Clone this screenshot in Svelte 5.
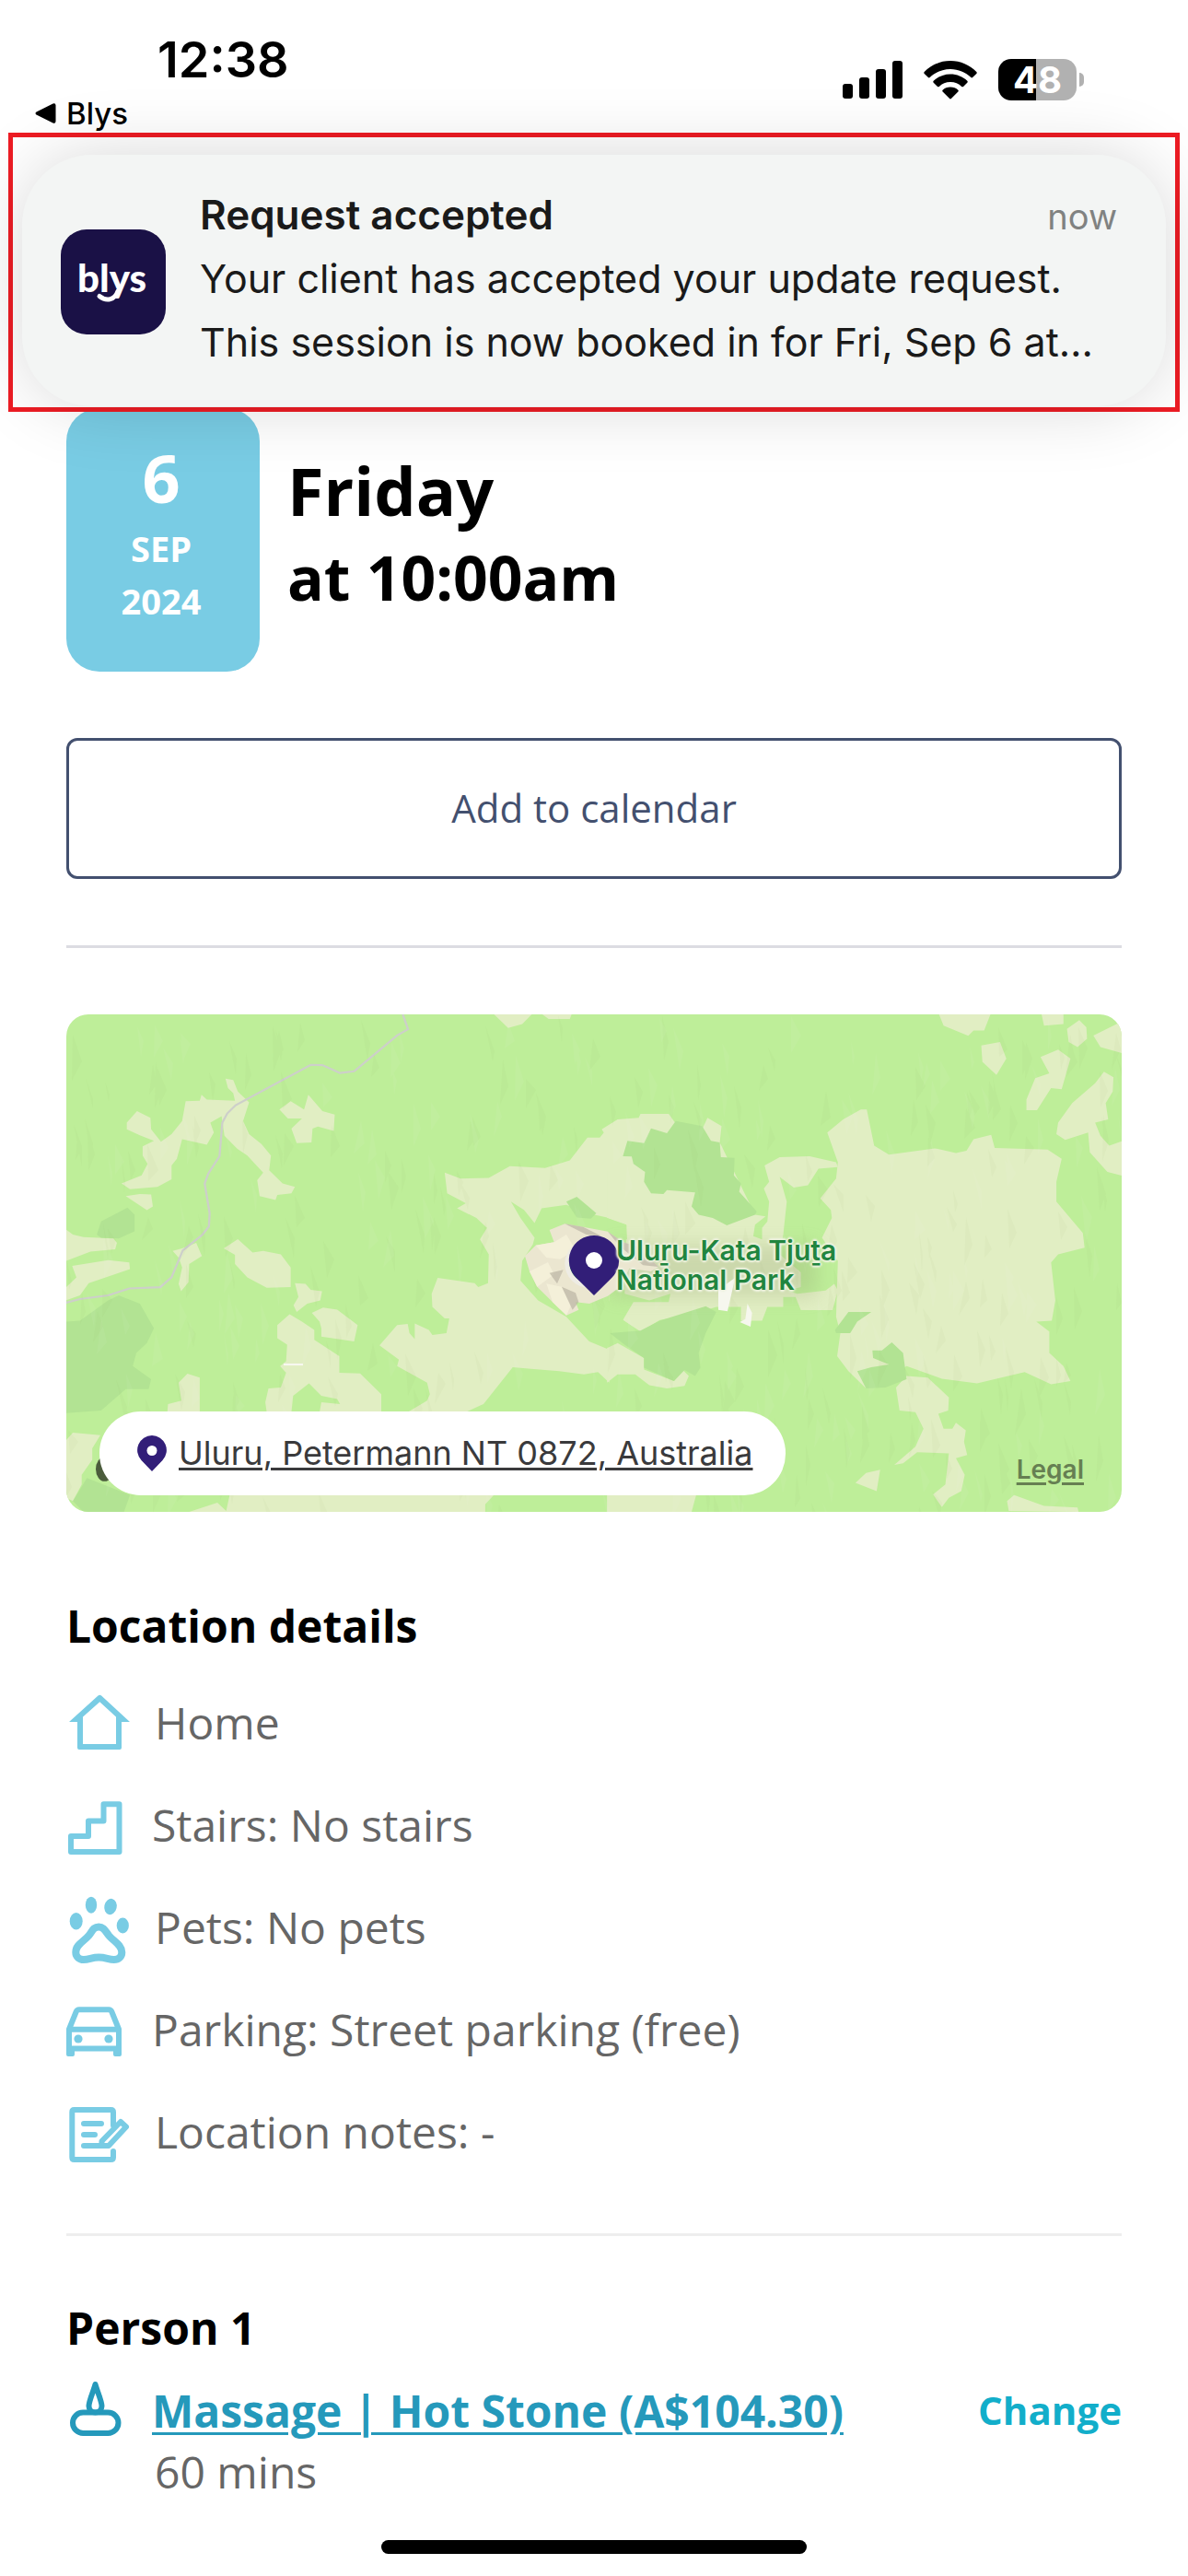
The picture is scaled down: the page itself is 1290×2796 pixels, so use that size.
<script>
	const details = [
		{ icon: "home", text: "Home" },
		{ icon: "stairs", text: "Stairs: No stairs", narrow: true },
		{ icon: "pets", text: "Pets: No pets" },
		{ icon: "car", text: "Parking: Street parking (free)", narrow: true },
		{ icon: "notes", text: "Location notes: -" }
	];

	// map shapes, traced per tile: west covers the left half, east the right one
	const west = {
		sand: [
			"203,360 232,325 270,345 272,380 300,418 330,395 360,355 370,295 410,293 415,275 430,290 510,293 505,270 490,255 483,226 505,230 518,265 550,298 533,355 550,395 585,425 612,460 607,505 645,545 680,555 670,575 630,580 625,595 580,583 573,535 590,512 545,460 517,440 480,400 472,340 440,360 450,390 430,427 360,410 345,470 330,490 330,532 290,555 212,562 188,545 245,520 262,485 248,460 248,432 280,415 240,398 203,380",
			"636,320 668,295 706,320 718,275 758,325 793,335 790,385 745,372 730,378 727,420 685,422 670,378 700,347 660,347",
			"200,583 240,577 272,578 277,615 260,626",
			"31,685 50,700 80,708 165,712 175,725 170,745 100,752 31,780",
			"48,795 150,778 210,785 212,805 95,848 70,885 31,900 31,860 60,830",
			"333,750 360,742 400,725 416,765 380,790 378,845 357,872 350,850 360,800 350,770",
			"478,742 518,714 560,755 590,750 640,760 668,800 668,860 600,862 545,830 510,790 510,762",
			"680,848 710,850 725,868 757,872 752,900 715,910 685,935 676,915 690,890",
			"728,938 760,922 800,928 858,975 848,1025 755,1010 755,985 750,965",
			"630,975 665,942 700,965 735,990 735,1020 806,1070 806,1120 865,1122 925,1185 925,1240 750,1240 755,1210 808,1215 800,1200 755,1190 720,1152 675,1190 670,1240 600,1240 596,1210 605,1168 640,1165 655,1120 638,1100 655,1085 658,1035 630,1015",
			"350,1150 375,1123 410,1135 410,1240 318,1240 320,1215 358,1205",
			"1105,512 1150,530 1230,528 1290,492 1390,498 1460,475 1510,405 1545,405 1568,375 1572,375 1572,1150 1540,1118 1500,1125 1430,1115 1350,1108 1298,1103 1215,1215 1165,1240 1000,1240 1055,1205 1063,1185 1055,1150 970,1100 975,1080 920,1037 970,975 1000,972 1005,1000 1020,1018 1020,970 1060,990 1070,1005 1110,1000 1118,955 1105,955 1070,920 1068,880 1085,832 1190,848 1200,860 1228,848 1230,760 1205,715 1225,680 1195,650 1140,620 1165,605 1112,575",
			"495,1491 1245,1491 1220,1520 1220,1543 380,1543 460,1515 485,1540",
			"31,1325 50,1302 128,1310 105,1350 105,1385 75,1430 75,1460 50,1510 31,1500",
			"1245,31 1352,31 1325,60 1285,72",
			"1382,31 1465,31 1460,45 1400,45"
		],
		grass: [
			"1293,600 1330,625 1360,665 1380,620 1450,610 1530,640 1572,650 1572,1050 1515,1025 1450,950 1370,900 1320,840 1325,780 1355,730 1360,710 1320,650"
		],
		forest: [
			"118,700 130,660 205,618 225,640 225,690 180,712 130,710",
			"31,965 70,962 150,900 180,885 240,910 280,985 260,1030 230,1060 220,1100 272,1140 265,1170 200,1170 130,1235 31,1243",
			"90,1440 212,1492 195,1543 80,1543 50,1510",
			"1450,600 1480,585 1535,635 1520,652 1480,648"
		]
	};

	const east = {
		sand: [
			"50,405 35,380 80,350 140,345 145,333 225,333 243,360 320,380 335,345 375,370 370,420 470,640 500,645 470,670 465,705 490,715 490,680 505,660 510,600 495,560 510,540 497,490 540,465 625,462 700,480 705,495 650,500 620,550 580,557 540,525 560,600 550,700 540,760 600,815 600,860 560,870 590,880 670,870 695,850 705,870 690,930 600,930 585,890 550,890 550,920 505,920 490,962 430,962 430,920 360,920 300,940 200,960 145,995 95,960 120,900 100,880 105,670 50,650",
			"50,1040 80,1030 155,1075 155,1110 240,1145 265,1112 282,1130 270,1160 220,1168 170,1158 130,1125 80,1125 50,1150",
			"675,390 720,350 770,320 787,320 808,430 850,457 980,438 1040,452 1070,445 1090,410 1140,397 1150,437 1300,442 1340,470 1325,540 1325,600 1400,695 1405,740 1330,760 1310,785 1322,900 1312,962 1268,965 1305,995 1305,1060 1345,1100 1365,1145 1310,1155 1235,1118 1100,1152 1000,1138 900,1100 785,1168 735,1115 703,1070 712,1000 700,950 705,780 660,710 688,650 685,625 655,590 700,530 705,480",
			"870,1165 900,1130 960,1135 1020,1195 1018,1235 990,1245 1005,1290 1030,1290 1040,1272 1068,1295 1063,1330 1072,1370 1040,1380 1065,1430 1055,1480 1020,1500 1000,1528 975,1490 1010,1460 1020,1365 930,1362 890,1395 865,1400 925,1345 948,1290 925,1240 880,1235",
			"755,1455 785,1425 825,1415 815,1480",
			"50,1491 303,1491 290,1543 50,1543",
			"1185,1510 1205,1492 1290,1525 1385,1530 1388,1543 1190,1540",
			"992,31 1138,31 1120,80 1090,80 1075,96 1005,65",
			"1283,31 1345,31 1345,60 1290,65",
			"1112,125 1165,115 1183,165 1155,215 1115,175",
			"1355,75 1390,48 1410,70 1412,105 1385,130 1360,115",
			"1430,95 1515,50 1515,150 1450,130",
			"1280,160 1330,138 1365,165 1340,258 1310,255 1270,322 1240,322 1240,290 1265,225 1305,210",
			"1435,240 1460,205 1487,222 1485,265 1465,300 1472,350 1435,360 1450,400 1475,430 1515,415 1515,522 1470,510 1420,450 1415,390 1350,412 1325,395 1330,360 1370,300"
		],
		grass: [
			"50,650 105,672 107,715 50,720",
			"50,905 100,880 170,900 230,880 225,905 125,905 95,960 140,995 60,1000 80,1030 50,1045"
		],
		forest: [
			"95,462 108,415 155,422 175,377 220,392 245,355 320,370 345,415 370,420 373,465 412,467 410,520 430,545 425,570 475,630 470,640 390,672 350,650 310,640 290,615 300,572 220,565 210,577 175,575 155,540 158,510 125,485 120,463",
			"58,1000 145,992 200,962 330,918 360,935 330,1000 310,1060 315,1105 300,1130 270,1112 240,1145 155,1105 155,1075 100,1035",
			"697,990 735,935 800,935 760,965 740,1000 700,1000",
			"760,1115 800,1103 850,1095 805,1075 803,1052 830,1052 858,1028 890,1060 900,1140 840,1165 785,1168"
		]
	};

	// faint slivers that give the ground some relief
	let seed = 7;
	function rand(max) {
		seed = (seed * 16807) % 2147483647;
		return Math.round((seed / 2147483647) * max);
	}

	function ridges(count) {
		let d = "";
		for (let i = 0; i < count; i++) {
			d += `M${rand(1146)} ${rand(540)}l${4 + rand(8)} ${12 + rand(18)}l${-rand(12)} ${8 + rand(16)}z`;
		}
		return d;
	}

	const shade = ridges(260);
	const light = ridges(200);
</script>

{#snippet land(tile)}
	{#each tile.sand as points}<polygon {points} fill="#e1eec3" />{/each}
	{#each tile.grass as points}<polygon {points} fill="#beee99" />{/each}
	{#each tile.forest as points}<polygon {points} fill="#b2e393" />{/each}
{/snippet}

{#snippet glyph(name)}
	{#if name === "home"}
		<path fill="currentColor" fill-rule="evenodd" d="M34.500 7.500q1.800-1.500 3.600 0L69 36h-9v28q0 2-2 2H14q-2 0-2-2V36H3zM36.300 14.300L18 30.500V60h36V30.500z" />
	{:else if name === "stairs"}
		<path class="line" d="M5 66V49h19V32.500h16.500V14.200H57.500V66z" />
	{:else if name === "pets"}
		<g fill="currentColor">
			<ellipse cx="10.700" cy="30.300" rx="7" ry="9.200" />
			<ellipse cx="27" cy="12.700" rx="6.200" ry="9" />
			<ellipse cx="48" cy="14.500" rx="6.700" ry="8.700" transform="rotate(12 48 14.500)" />
			<ellipse cx="61.300" cy="35" rx="6.600" ry="8.500" />
		</g>
		<path class="line thick" d="M35.300 36.500c-6 0-7 4.500-11 9.500-5 6-14 9.500-14 18 0 5 4 8 8.500 8 6 0 9-2.500 16.500-2.500s10.500 2.500 16.500 2.500c5 0 8.500-3 8.500-8 0-8-9-12-14-18-4-5-5.500-9.500-11-9.500z" />
	{:else if name === "car"}
		<path class="line" d="M3 36.500L10.500 18q1-2.700 3.500-2.700h32q2.500 0 3.500 2.700L57 36.500v21H3zM3 36.700h54" />
		<path fill="currentColor" d="M0 56h9v8q0 2-2 2H2q-2 0-2-2zM51 56h9v8q0 2-2 2h-5q-2 0-2-2z" />
		<circle cx="13" cy="47" r="4.600" fill="currentColor" />
		<circle cx="46" cy="47" r="4.600" fill="currentColor" />
	{:else if name === "notes"}
		<path class="line" stroke-linecap="round" d="M51 30V15.500Q51 13 48.500 13h-40Q6.300 13 6.300 15.500v49Q6.300 67 8.500 67h40q2.500 0 2.500-2.500V58M19 28h19M19 40h12M19 52h20" />
		<path class="line" d="M38.500 52v-5L59 26l6 5.500L46 52z" />
	{:else if name === "stone"}
		<rect class="line" x="7" y="38.500" width="49.500" height="22.500" rx="11.200" />
		<path class="line" d="M31.500 8c-1.500 6-7 18-7 23.500 0 4 3 7 7 7s7-3 7-7c0-5.500-5.500-17.500-7-23.500z" />
	{/if}
{/snippet}

<div class="screen">
	<header class="status">
		<div>
			<div class="status__time">12:38</div>
			<a class="status__back" href="#blys">
				<svg width="23" height="22" viewBox="0 0 23 22" aria-hidden="true">
					<path d="M1.500 9.500L19.500.5Q22.500-.500 22.500 2.500v17q0 3-3 2L1.500 12.500q-2-1.500 0-3z" />
				</svg>
				Blys
			</a>
		</div>
		<div class="status__icons">
			<svg width="65" height="42" viewBox="0 0 65 42" aria-label="Signal">
				<rect y="25" width="11" height="16" rx="3" />
				<rect x="18" y="18" width="11" height="23" rx="3" />
				<rect x="36" y="9" width="11" height="32" rx="3" />
				<rect x="54" width="11" height="41" rx="3" />
			</svg>
			<svg width="58" height="42" viewBox="0 0 58 42" aria-label="Wi-Fi">
				<path d="M29 0C18 0 8 4.500.700 12q-.900 1 0 2l4.200 4q.900.800 1.800 0C12.500 12.500 20.300 9 29 9s16.500 3.500 22.300 9q.900.800 1.800 0l4.200-4q.900-1 0-2C50 4.500 40 0 29 0z" />
				<path d="M29 14.500c-7 0-13.500 2.700-18.300 7.200q-.900 1 0 2l4.300 4.200q.900.800 1.800 0C20 24.900 24.200 23 29 23s9 1.900 12.200 4.900q.900.800 1.800 0l4.300-4.200q.900-1 0-2C42.500 17.200 36 14.500 29 14.500z" />
				<path d="M29 28.500c-3.300 0-6.200 1.200-8.400 3.200q-.900.900 0 1.800l7.500 7.600q.900.800 1.800 0l7.500-7.600q.900-.900 0-1.800c-2.200-2-5.100-3.200-8.400-3.200z" />
			</svg>
			<div class="battery">
				<span class="battery__cell">48</span>
				<span class="battery__nub"></span>
			</div>
		</div>
	</header>

	<section class="highlight">
		<article class="notice">
			<svg class="notice__logo" width="114" height="114" viewBox="0 0 114 114" aria-label="blys">
				<rect width="114" height="114" rx="28" fill="#1a1146" />
				<text x="18" y="68">blys</text>
				<path d="M62 67C59 76 50 79 42 72.500" fill="none" stroke="#fff" stroke-width="5" stroke-linecap="round" />
			</svg>
			<div class="notice__body">
				<div class="notice__head">
					<h2>Request accepted</h2>
					<time>now</time>
				</div>
				<p>Your client has accepted your update request.</p>
				<p>This session is now booked in for Fri, Sep 6 at…</p>
			</div>
		</article>
	</section>

	<main>
		<div class="when">
			<div class="date">
				<span class="date__day">6</span>
				<span class="date__small">SEP</span>
				<span class="date__small">2024</span>
			</div>
			<h1>Friday<span>at 10:00am</span></h1>
		</div>

		<button class="calendar" type="button">Add to calendar</button>

		<hr class="rule--dark" />

		<div class="map">
			<svg class="map__land" viewBox="0 0 1146 540" preserveAspectRatio="xMidYMid slice" aria-hidden="true">
				<defs>
					<filter id="soft" x="-20%" y="-50%" width="140%" height="200%">
						<feGaussianBlur stdDeviation="10" />
					</filter>
				</defs>
				<rect width="1146" height="540" fill="#beee99" />
				<g transform="translate(-12 -11) scale(.3827 .3571)">
					{@render land(west)}
					<polyline points="31,907 70,896 150,885 210,864 298,860 330,830 362,748 418,700 436,675 438,635 424,545 434,515 466,462 474,360 488,332 512,307 725,184 758,185 808,209 848,204 970,95 1001,76 986,31" fill="none" stroke="#cdcfca" stroke-width="6" />
					<rect x="648" y="1092" width="55" height="6" fill="#f7f8f0" />
					<ellipse cx="140" cy="1413" rx="25" ry="37" fill="#4b5c3c" />
				</g>
				<g transform="translate(568 -11) scale(.3827 .3571)">
					{@render land(east)}
				</g>
				<path d={shade} fill="#7a9a50" opacity=".04" />
				<path d={light} fill="#fff" opacity=".05" />
				<rect x="590" y="250" width="225" height="56" fill="#8f9a6c" opacity=".26" filter="url(#soft)" />
				<g transform="translate(478 199) scale(.3333)">
					<path d="M140 105l50-20 60 10 80 15 50 35 50 15 65 65-25 15-70-10-30 60-40 30-60 25-45-5 10 25-40 18-45-43-50-50-25-50-15-50 35-35 60-10z" fill="#ebe6d0" />
					<path d="M155 145l40-25 30 50-50 30zM95 155l60-10 20 55-45-5zM130 280l50 10 30 60-15 33-45-43zM75 240l60-30 20 40-55 40z" fill="#f4f0d9" />
					<path d="M190 85l60 10 60 30-50-5zM180 290l45 20 10 30-20 25zM330 110l50 35 50 15 65 65-50-5-75-60zM140 245l45-10-20 45z" fill="#b7b19f" opacity=".65" />
					<circle cx="268" cy="215" r="78" fill="#eeece4" />
					<circle cx="275" cy="210" r="70" fill="#1f9a4c" />
					<path d="M690 300l55-40-25 110-30-5zM785 345l15 30-5 45-35-15 18-10z" fill="#f6f7ee" />
					<path d="M285 123a81 81 0 0 1 57 139l-57 56-57-56a81 81 0 0 1 57-139z" fill="#321e78" />
					<circle cx="285" cy="204" r="27" fill="#fff" />
				</g>
			</svg>
			<p class="map__label">Uluṟu-Kata Tjuṯa<br />National Park</p>
			<div class="address">
				<svg width="32" height="39" viewBox="0 0 32 39" aria-hidden="true">
					<path d="M16 0a16 16 0 0 1 11.500 27L16 39 4.500 27A16 16 0 0 1 16 0z" fill="#321e78" />
					<circle cx="16" cy="16.500" r="5.500" fill="#fff" />
				</svg>
				<a href="#map">Uluru, Petermann NT 0872, Australia</a>
			</div>
			<a class="map__legal" href="#legal">Legal</a>
		</div>

		<h3 class="location">Location details</h3>
		<ul class="details">
			{#each details as item}
				<li>
					<svg class="icon" class:icon--narrow={item.narrow} height="72" aria-hidden="true">
						{@render glyph(item.icon)}
					</svg>
					{item.text}
				</li>
			{/each}
		</ul>

		<hr />

		<h3 class="person">Person 1</h3>
		<div class="service">
			<svg class="icon icon--narrow" height="72" aria-hidden="true">
				{@render glyph("stone")}
			</svg>
			<a href="#service">Massage | Hot Stone (A$104.30)</a>
			<button type="button">Change</button>
		</div>
		<p class="duration">60 mins</p>
	</main>

	<div class="home-bar"></div>
</div>

<style>
	:global(body) {
		margin: 0;
		background: #fff;
	}

	.screen {
		font-family: "Open Sans", "Noto Sans", sans-serif;
		font-size: 48px;
		line-height: 66px;
		color: #666;
		padding-bottom: 24px;
		overflow: hidden;
	}

	h1, h2, h3, p, ul {
		margin: 0;
		padding: 0;
	}

	button {
		font-family: inherit;
		cursor: pointer;
	}

	.status {
		position: relative;
		z-index: 2;
		display: flex;
		justify-content: space-between;
		align-items: flex-start;
		padding: 33px 113px 1px 38px;
		font-family: Inter, "Liberation Sans", sans-serif;
		color: #000;
	}

	.status__time {
		padding-left: 133px;
		font-size: 54px;
		font-weight: 600;
		line-height: 64px;
	}

	.status__back {
		display: flex;
		align-items: center;
		gap: 11px;
		margin-top: 6px;
		font-size: 33px;
		font-weight: 500;
		line-height: 40px;
		color: #000;
		text-decoration: none;
	}

	.status__icons {
		display: flex;
		align-items: center;
		gap: 23px;
		margin-top: 31px;
	}

	.battery {
		display: flex;
		align-items: center;
		gap: 3px;
	}

	.battery__cell {
		width: 85px;
		border-radius: 14px;
		background: linear-gradient(90deg, #000 48%, #b1b1b1 48%);
		color: #fff;
		font-size: 40px;
		font-weight: 700;
		line-height: 45px;
		text-align: center;
	}

	.battery__nub {
		width: 5px;
		height: 15px;
		border-radius: 0 6px 6px 0;
		background: #b1b1b1;
	}

	.highlight {
		position: relative;
		z-index: 1;
		margin: 0 9px;
		padding: 19px 10px 1px;
		border: 5px solid #ed1c24;
	}

	.notice {
		display: flex;
		align-items: center;
		gap: 37px;
		padding: 31px 53px 35px 42px;
		border-radius: 76px;
		background: #f3f5f4;
		box-shadow: 0 0 80px -6px rgba(0, 0, 0, 0.18);
		font-family: Inter, "Liberation Sans", sans-serif;
		font-size: 43px;
		line-height: 69px;
		color: #1a1a1a;
	}

	.notice__logo {
		flex: none;
		margin-top: 6px;
	}

	.notice__logo text {
		fill: #fff;
		font-family: Lato, sans-serif;
		font-size: 42px;
		font-weight: 900;
	}

	.notice__body {
		flex: 1;
		min-width: 0;
	}

	.notice__body p {
		overflow: hidden;
		white-space: nowrap;
	}

	.notice__head {
		display: flex;
		justify-content: space-between;
		align-items: baseline;
	}

	.notice__head h2 {
		font-size: 44px;
		font-weight: 600;
	}

	.notice__head time {
		font-size: 38px;
		line-height: 60px;
		color: #808281;
	}

	main {
		padding: 0 72px;
	}

	.when {
		display: flex;
		gap: 30px;
		margin-top: -4px;
	}

	.date {
		display: flex;
		flex-direction: column;
		align-items: center;
		box-sizing: border-box;
		width: 210px;
		padding: 35px 4px 48px 0;
		border-radius: 36px;
		background: #79cce4;
		color: #fff;
		font-weight: 700;
	}

	.date__day {
		margin-bottom: 9px;
		font-size: 72px;
		line-height: 80px;
	}

	.date__small {
		font-size: 38px;
		line-height: 57px;
	}

	h1 {
		padding-top: 43px;
		font-size: 72px;
		line-height: 92px;
		color: #000;
	}

	h1 span {
		display: block;
		font-size: 66px;
		line-height: 96px;
	}

	.calendar {
		display: block;
		width: 100%;
		height: 153px;
		margin-top: 72px;
		padding: 0 0 2px;
		border: 3px solid #43506f;
		border-radius: 12px;
		background: #fff;
		color: #43506f;
		font-size: 42px;
	}

	hr {
		height: 3px;
		margin: 77px 0 67px;
		border: 0;
		background: #eee;
	}

	.rule--dark {
		margin: 72px 0;
		background: #dcdce2;
	}

	.map {
		position: relative;
		height: 540px;
		border-radius: 24px;
		overflow: hidden;
		font-family: Inter, "Liberation Sans", sans-serif;
	}

	.map__land {
		display: block;
		width: 100%;
		height: 100%;
	}

	.map__label {
		position: absolute;
		top: 240px;
		left: calc(50% + 24px);
		font-size: 30px;
		font-weight: 600;
		line-height: 32px;
		color: #21853f;
		text-shadow: 0 0 3px #eef3e0, 2px 0 2px #eef3e0, -2px 0 2px #eef3e0, 0 2px 2px #eef3e0, 0 -2px 2px #eef3e0;
	}

	.address {
		position: absolute;
		left: 36px;
		bottom: 18px;
		display: flex;
		align-items: center;
		gap: 13px;
		padding: 0 36px 0 41px;
		border-radius: 45px;
		background: #fff;
		line-height: 91px;
	}

	.address a {
		font-size: 36px;
		color: #3a3a3c;
		text-decoration-thickness: 3px;
		text-underline-offset: 3px;
	}

	.map__legal {
		position: absolute;
		right: 41px;
		bottom: 28px;
		font-size: 28px;
		font-weight: 600;
		line-height: 36px;
		color: #667f52;
		text-decoration-thickness: 3px;
		text-underline-offset: 4px;
	}

	h3 {
		font-size: 48px;
		color: #000;
	}

	.location {
		margin: 91px 0 39px;
	}

	.details {
		display: flex;
		flex-direction: column;
		gap: 45px;
		list-style: none;
	}

	.details li {
		display: flex;
		align-items: center;
		gap: 27px;
	}

	.icon {
		flex: none;
		width: 69px;
		margin: -4px 0 -2px;
		overflow: visible;
		color: #79cce4;
	}

	.icon--narrow {
		width: 66px;
	}

	.icon :global(.line) {
		fill: none;
		stroke: currentColor;
		stroke-width: 6;
		stroke-linejoin: round;
	}

	.icon :global(.thick) {
		stroke-width: 8;
	}

	.person {
		margin-bottom: 24px;
	}

	.service {
		display: flex;
		align-items: center;
		gap: 27px;
	}

	.service .icon {
		color: #2599bb;
	}

	.service a {
		font-weight: 700;
		color: #2599bb;
		text-decoration-thickness: 3px;
		text-underline-offset: 5px;
	}

	.service button {
		margin-left: auto;
		padding: 0 0 4px;
		border: 0;
		background: none;
		color: #12aeca;
		font-size: 42px;
		font-weight: 700;
	}

	.duration {
		padding-left: 96px;
	}

	.home-bar {
		width: 462px;
		height: 15px;
		margin: 41px auto 0;
		border-radius: 8px;
		background: #000;
	}
</style>
